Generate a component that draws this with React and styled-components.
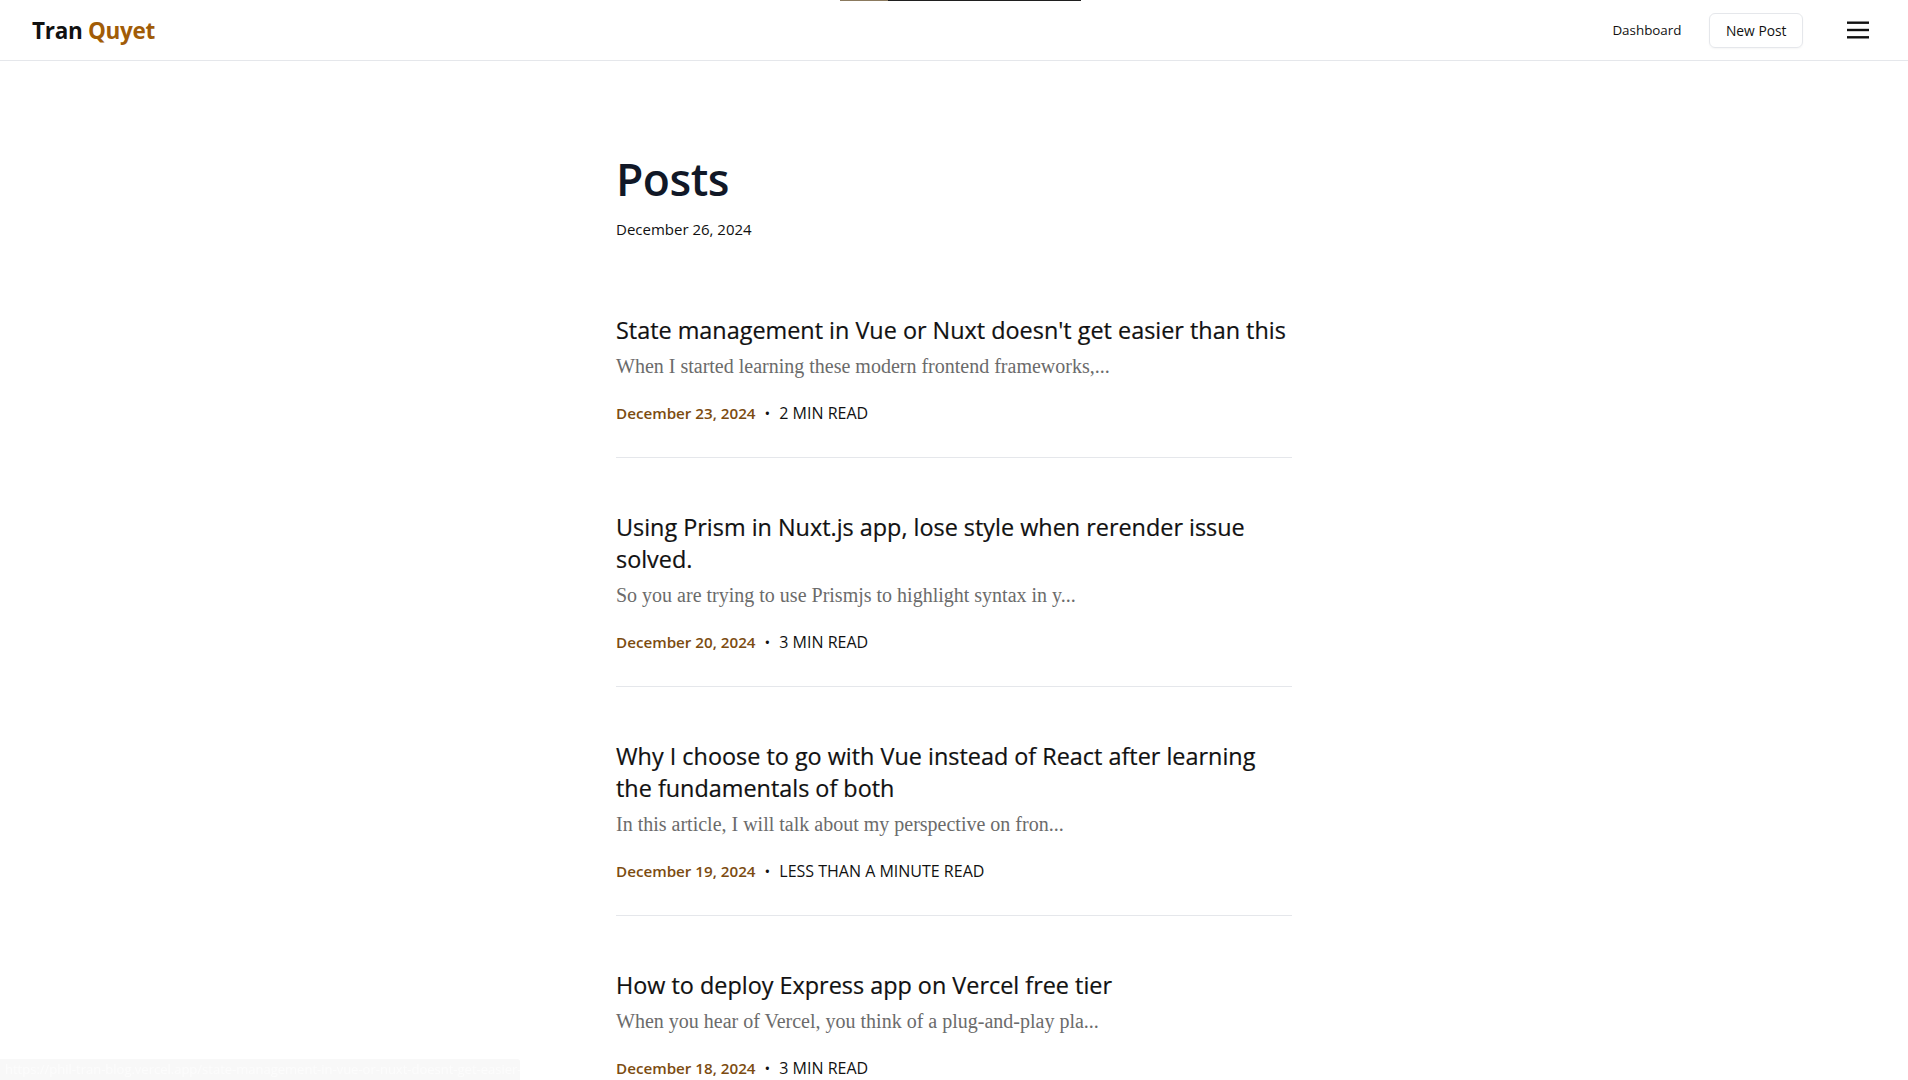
import React from 'react';
import styled, { createGlobalStyle } from 'styled-components';

const GlobalStyle = createGlobalStyle`
	* { box-sizing: border-box; }
	body {
		margin: 0;
		background: #fff;
		font-family: "Open Sans", "Noto Sans", sans-serif;
		color: #111;
	}
	a { color: inherit; text-decoration: none; }
`

const LoadingBar = styled.div`
	position: fixed;
	top: 0;
	left: 840px;
	width: 241px;
	height: 1px;
	background: linear-gradient(to right, #8b7a5e 0, #8b7a5e 48px, #1f1f1f 48px);
	z-index: 20;
`

const HeaderWrapper = styled.header`
	height: 61px;
	border-bottom: 1px solid #e5e7eb;
	display: flex;
	align-items: center;
	justify-content: space-between;
	padding: 0 31px 0 32px;
	.logo {
		font-size: 22.5px;
		font-weight: 700;
		letter-spacing: -0.3px;
		color: #111;
		span { color: #a15c07; }
	}
`

const Nav = styled.nav`
	display: flex;
	align-items: center;
`

const NavLink = styled.a`
	font-size: 13.4px;
	color: #111;
	margin-right: 28px;
`

const NavButton = styled.a`
	display: flex;
	align-items: center;
	height: 35px;
	padding: 0 15.5px;
	border: 1px solid #e5e7eb;
	border-radius: 6px;
	font-size: 13.8px;
	box-shadow: 0 1px 2px rgba(0, 0, 0, 0.04);
`

const MenuButton = styled.button`
	background: none;
	border: 0;
	padding: 8px;
	margin-left: 36px;
	display: flex;
	cursor: pointer;
`

const Main = styled.main`
	width: 676px;
	margin: 0 auto;
	padding: 90px 0 80px;
	.page-title {
		margin: 0 0 10px;
		font-size: 44.5px;
		line-height: 56px;
		font-weight: 600;
		color: #111827;
		letter-spacing: -0.5px;
	}
	.page-date {
		font-size: 15px;
		line-height: 24px;
		color: #111;
	}
`

const PostList = styled.div`
	margin-top: 73px;
`

const Post = styled.article`
	padding-bottom: 32px;
	border-bottom: 1px solid #e5e7eb;
	margin-bottom: 53px;
	.title {
		margin: 0 0 6px;
		font-size: 23.4px;
		line-height: 32px;
		font-weight: 500;
		color: #111;
		-webkit-text-stroke: 0.2px #111;
	}
	.excerpt {
		margin: 0 0 21px;
		font-family: "Liberation Serif", serif;
		font-size: 20px;
		line-height: 28px;
		color: #6b6b6b;
	}
`

const Meta = styled.div`
	font-size: 15.2px;
	line-height: 24px;
	display: flex;
	align-items: center;
	.date {
		color: #7c4c10;
		font-weight: 600;
	}
	.dot {
		margin: 0 9px;
		color: #111;
	}
	.read {
		font-size: 16px;
		text-transform: uppercase;
		color: #111;
	}
`

const StatusBar = styled.div`
	position: fixed;
	left: 0;
	bottom: 0;
	width: 520px;
	height: 21px;
	padding: 0 5px;
	background: #f8f8f8;
	border-top-right-radius: 3px;
	font-size: 13px;
	line-height: 21px;
	color: #fcfcfc;
	white-space: nowrap;
	overflow: hidden;
`

const posts = [
	{
		title: "State management in Vue or Nuxt doesn't get easier than this",
		excerpt: 'When I started learning these modern frontend frameworks,...',
		date: 'December 23, 2024',
		read: '2 min read'
	},
	{
		title: 'Using Prism in Nuxt.js app, lose style when rerender issue solved.',
		excerpt: 'So you are trying to use Prismjs to highlight syntax in y...',
		date: 'December 20, 2024',
		read: '3 min read'
	},
	{
		title: 'Why I choose to go with Vue instead of React after learning the fundamentals of both',
		excerpt: 'In this article, I will talk about my perspective on fron...',
		date: 'December 19, 2024',
		read: 'less than a minute read'
	},
	{
		title: 'How to deploy Express app on Vercel free tier',
		excerpt: 'When you hear of Vercel, you think of a plug-and-play pla...',
		date: 'December 18, 2024',
		read: '3 min read'
	}
];

const App = () => {
	return (
		<>
			<GlobalStyle />
			<LoadingBar />
			<HeaderWrapper>
				<a className="logo" href="#">Tran <span>Quyet</span></a>
				<Nav>
					<NavLink href="#">Dashboard</NavLink>
					<NavButton href="#">New Post</NavButton>
					<MenuButton aria-label="menu">
						<svg width="22" height="18" viewBox="0 0 22 18">
							<rect x="0" y="0.5" width="22" height="2.4" fill="#111" />
							<rect x="0" y="7.8" width="22" height="2.4" fill="#111" />
							<rect x="0" y="15.1" width="22" height="2.4" fill="#111" />
						</svg>
					</MenuButton>
				</Nav>
			</HeaderWrapper>

			<Main>
				<h1 className="page-title">Posts</h1>
				<div className="page-date">December 26, 2024</div>

				<PostList>
					{posts.map((post) => (
						<Post key={post.title}>
							<h2 className="title">{post.title}</h2>
							<p className="excerpt">{post.excerpt}</p>
							<Meta>
								<span className="date">{post.date}</span>
								<span className="dot">•</span>
								<span className="read">{post.read}</span>
							</Meta>
						</Post>
					))}
				</PostList>
			</Main>

			<StatusBar>https://phil-tran-blog.vercel.app/state-management-in-vue-or-nuxt-doesnt-get-easier-than-this</StatusBar>
		</>
	);
}

export default App;
